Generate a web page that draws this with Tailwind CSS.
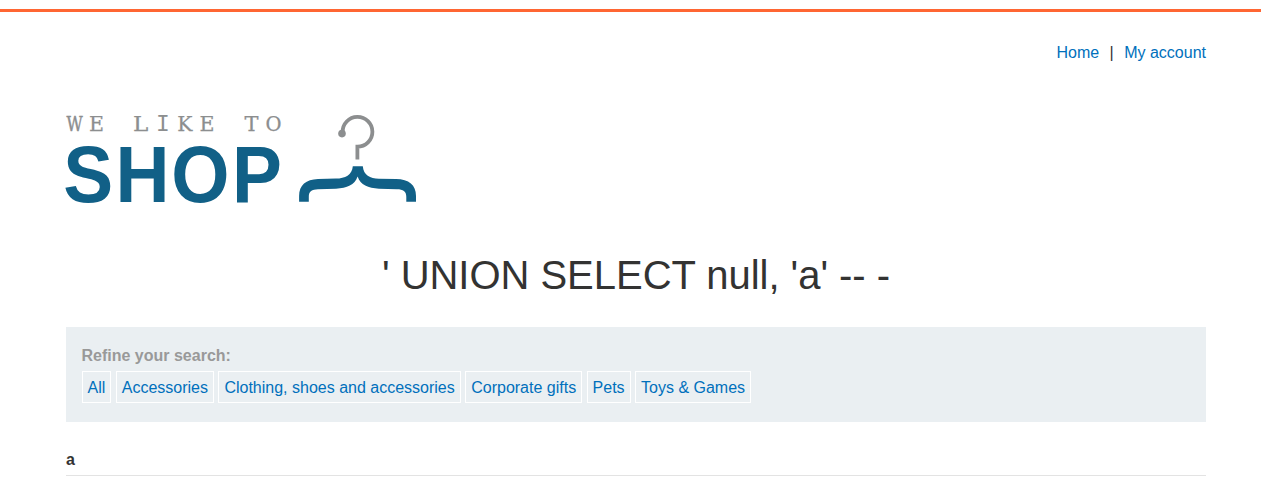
<!DOCTYPE html>
<html lang="en">
<head>
<meta charset="utf-8">
<title>We Like to Shop</title>
<script src="https://cdn.jsdelivr.net/npm/@tailwindcss/browser@4"></script>
</head>
<body class="bg-white font-['Liberation_Sans',Arial,sans-serif] text-base text-[#333332] overflow-hidden">
<div class="mt-[9px] h-[3px] bg-[#ff6633]"></div>
<div class="ml-[66px] w-[1140px]">
  <nav class="flex justify-end pt-[29px] leading-6">
    <a href="#" class="text-[#0070bc]">Home</a>
    <span class="w-[25px] text-center">|</span>
    <a href="#" class="text-[#0070bc]">My account</a>
  </nav>
  <svg class="mt-[45px] block overflow-visible" width="352" height="96" viewBox="66 110 352 96" role="img" aria-label="We like to shop">
    <g font-family="'DejaVu Serif', serif" font-size="20.5" fill="#8c8e8f" stroke="#8c8e8f" stroke-width=".25">
      <text x="66.4" y="130.8" textLength="16.2" lengthAdjust="spacingAndGlyphs" stroke-width=".5">W</text>
      <text x="89" y="130.8" textLength="15" lengthAdjust="spacingAndGlyphs">E</text>
      <text x="132.9" y="130.8" textLength="15.3" lengthAdjust="spacingAndGlyphs">L</text>
      <text x="155.9" y="130.8" font-family="'Liberation Mono', monospace" font-size="23" stroke="none">I</text>
      <text x="177.3" y="130.8" textLength="15.2" lengthAdjust="spacingAndGlyphs">K</text>
      <text x="199.5" y="130.8" textLength="15" lengthAdjust="spacingAndGlyphs">E</text>
      <text x="244.6" y="130.8" textLength="14" lengthAdjust="spacingAndGlyphs">T</text>
      <text x="265.5" y="130.8" textLength="16" lengthAdjust="spacingAndGlyphs">O</text>
    </g>
    <text transform="scale(.93 1)" x="68 124.2 184.2 249.6" y="202" font-family="Liberation Sans, Arial, sans-serif" font-weight="700" font-size="80.5" fill="#116087">SHOP</text>
    <path d="M342.6 132.2A14.9 14.9 0 1 1 357.4 146.7V159.6" fill="none" stroke="#8c8e8f" stroke-width="3.8"/>
    <circle cx="342" cy="133.6" r="3.8" fill="#8c8e8f"/>
    <path d="M352.8 166.2H362.8C363.5 175 370 178.5 379 178.7L396 179C409 179.2 416 185 416 196V201.7H406.3V197C406.3 191 403 189.4 397 189.3L379 188.7C368 188.3 360.5 185 357.6 176.6C354.7 185 347 188.3 336 188.7L318 189.3C312 189.5 308.8 191 308.8 197V201.7H299.1V196C299.1 185 306 179.4 318 179L336 178.6C345 178.4 352.2 175 352.8 166.2Z" fill="#116087"/>
  </svg>
  <h1 class="mt-[45px] text-center text-[40px] leading-[48px] tracking-[-0.03px]">' UNION SELECT null, 'a' -- -</h1>
  <section class="mt-7 h-[95px] bg-[#eaeff2] px-[15.5px] pt-[17px] leading-6">
    <div class="font-bold text-[#999]">Refine your search:</div>
    <div class="mt-[3px] flex gap-[4.45px] whitespace-nowrap text-[#0070bc]">
      <a href="#" class="h-8 border border-white px-[5px] leading-[32px]">All</a>
      <a href="#" class="h-8 border border-white px-[5px] leading-[32px]">Accessories</a>
      <a href="#" class="h-8 border border-white px-[5px] leading-[32px]">Clothing, shoes and accessories</a>
      <a href="#" class="h-8 border border-white px-[5px] leading-[32px]">Corporate gifts</a>
      <a href="#" class="h-8 border border-white px-[5px] leading-[32px]">Pets</a>
      <a href="#" class="h-8 border border-white px-[5px] leading-[32px]">Toys &amp; Games</a>
    </div>
  </section>
  <div class="mt-[26px] h-7 border-b border-[#e3e3e3] font-bold leading-6">a</div>
</div>
</body>
</html>
